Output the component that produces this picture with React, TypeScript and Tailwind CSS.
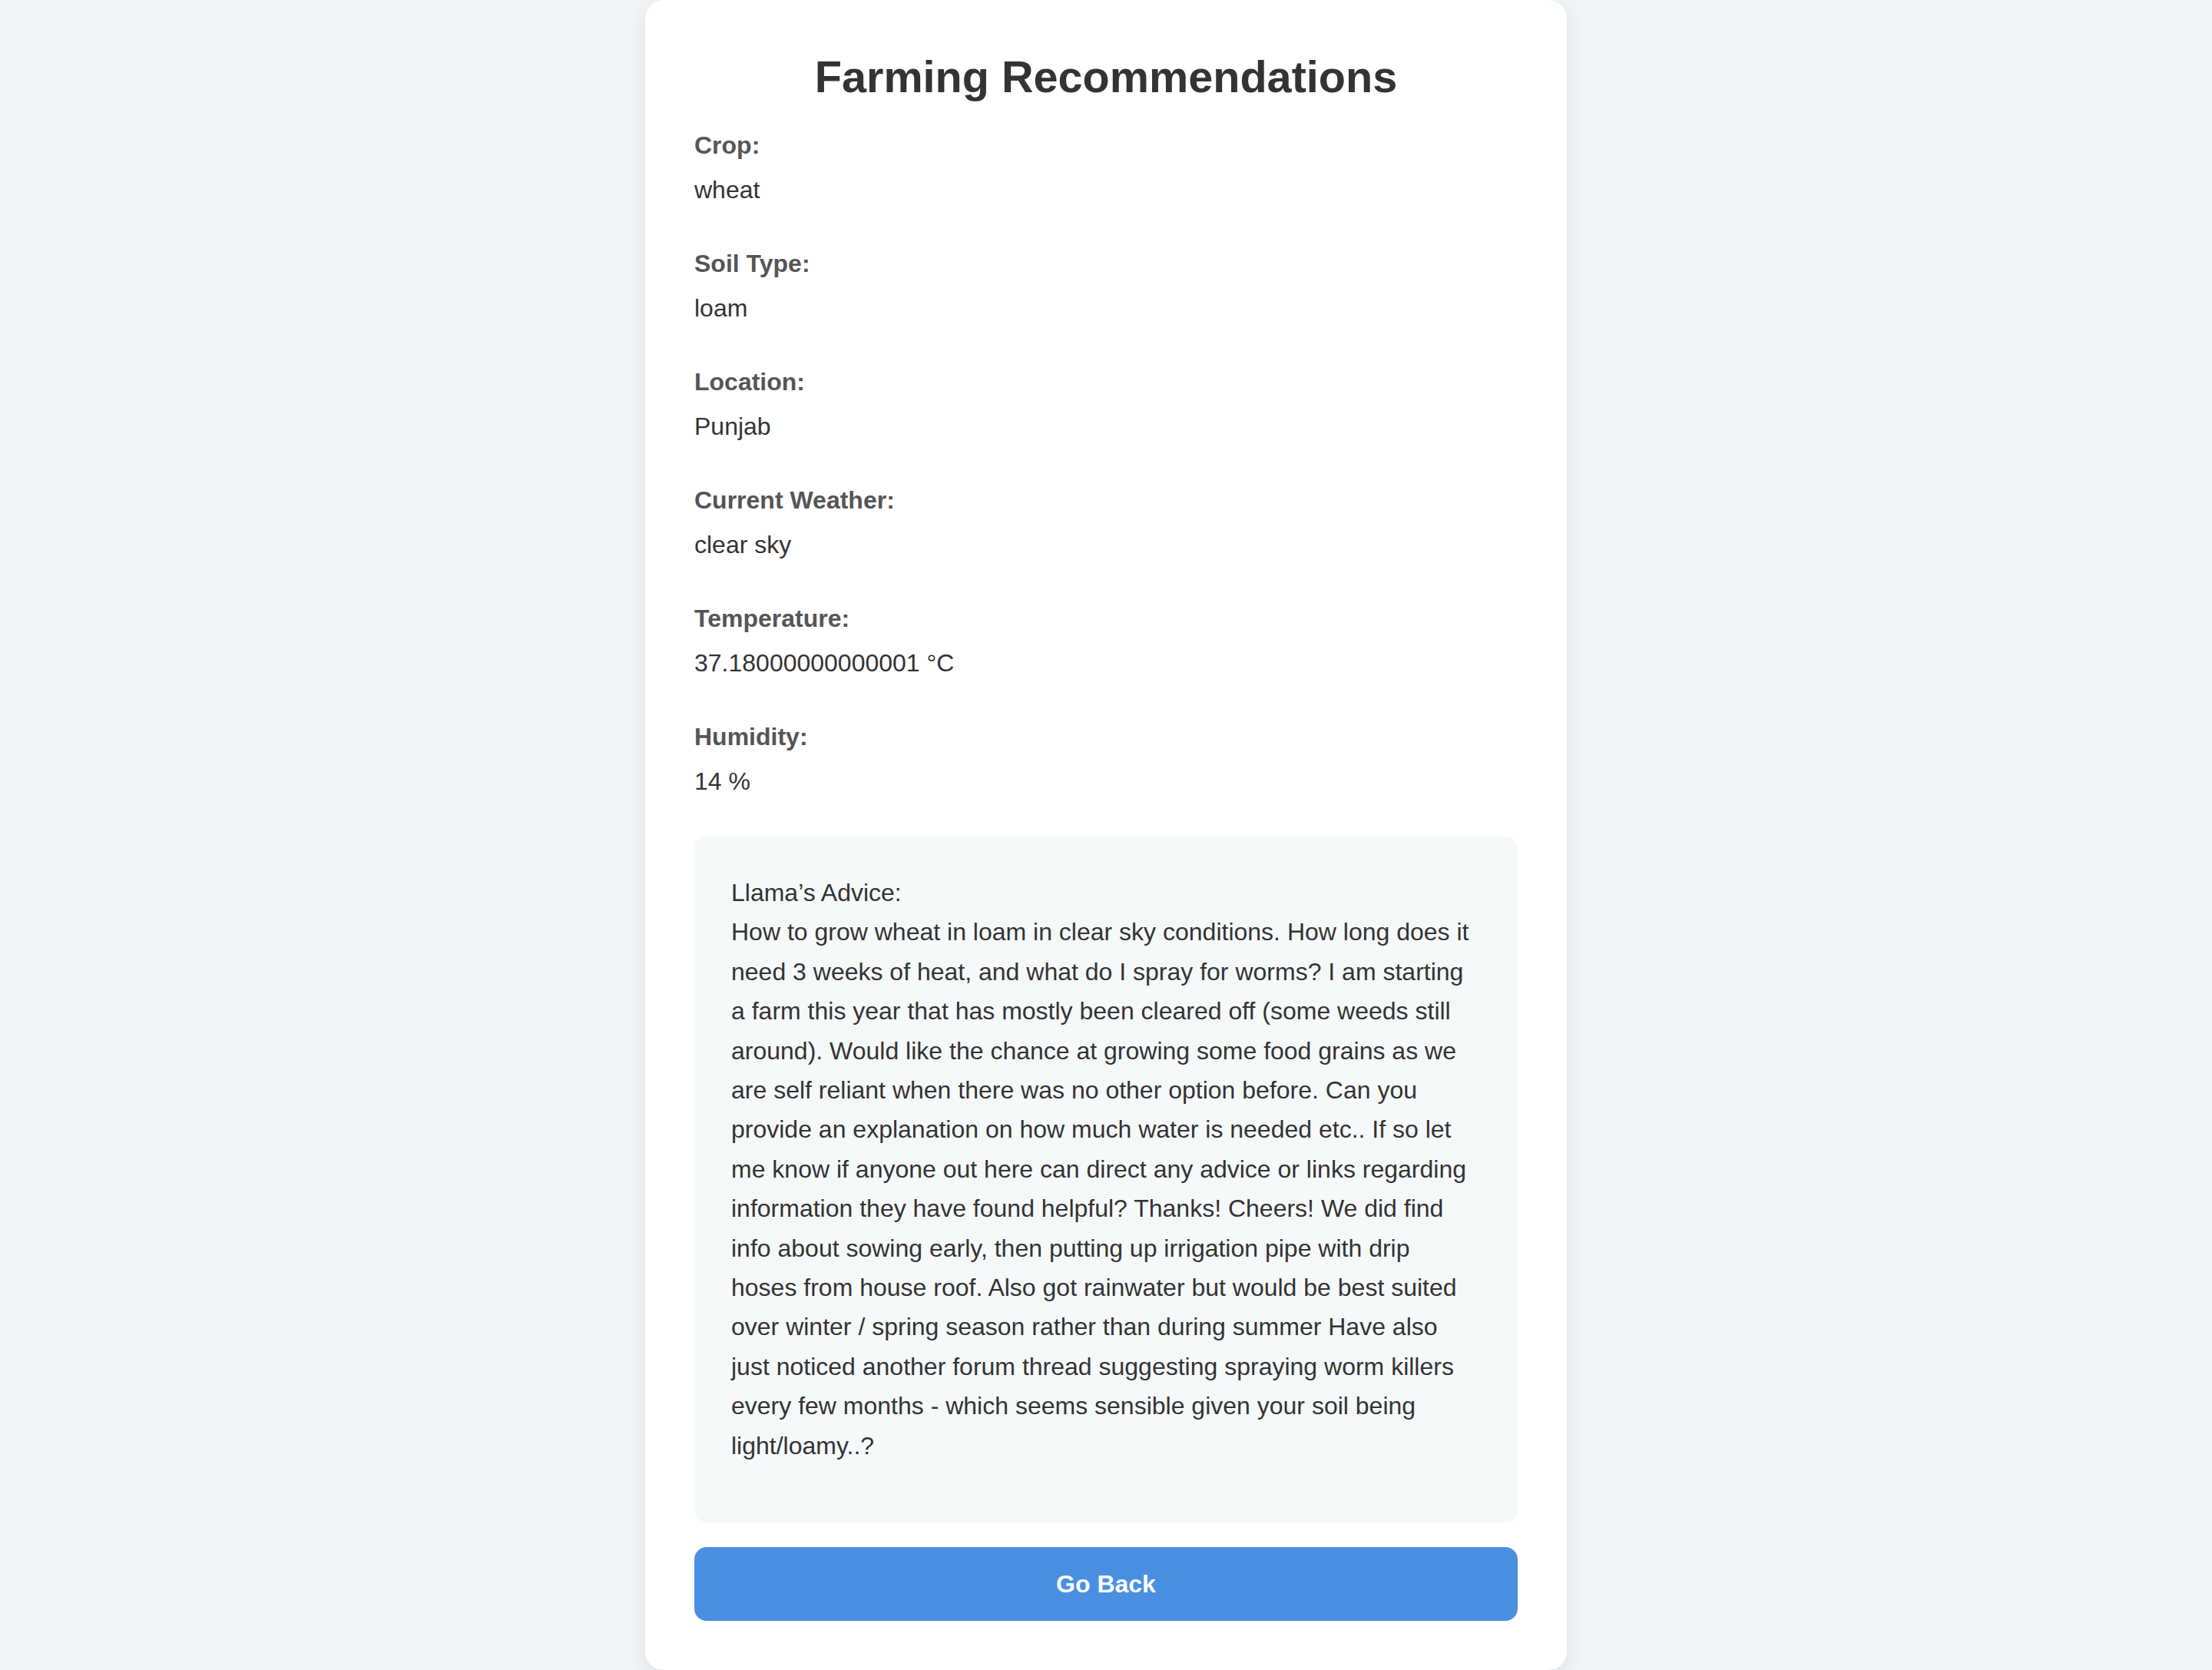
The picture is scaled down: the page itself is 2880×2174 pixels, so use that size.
import React from "react";

const fields: { label: string; value: string }[] = [
  { label: "Crop:", value: "wheat" },
  { label: "Soil Type:", value: "loam" },
  { label: "Location:", value: "Punjab" },
  { label: "Current Weather:", value: "clear sky" },
  { label: "Temperature:", value: "37.18000000000001 °C" },
  { label: "Humidity:", value: "14 %" },
];

const advice =
  "How to grow wheat in loam in clear sky conditions. How long does it need 3 weeks of heat, and what do I spray for worms? I am starting a farm this year that has mostly been cleared off (some weeds still around). Would like the chance at growing some food grains as we are self reliant when there was no other option before. Can you provide an explanation on how much water is needed etc.. If so let me know if anyone out here can direct any advice or links regarding information they have found helpful? Thanks! Cheers! We did find info about sowing early, then putting up irrigation pipe with drip hoses from house roof. Also got rainwater but would be best suited over winter / spring season rather than during summer Have also just noticed another forum thread suggesting spraying worm killers every few months - which seems sensible given your soil being light/loamy..?";

export default function App() {
  return (
    <div
      className="min-h-screen w-full bg-[#f2f5f8] flex justify-center"
      style={{ fontFamily: '"Liberation Sans", Arial, Helvetica, sans-serif' }}
    >
      <div className="w-[1200px] bg-white rounded-[24px] shadow-[0_8px_28px_rgba(0,0,0,0.09)] px-[64px] pt-[64px] pb-[64px] flex flex-col">
        <h1 className="text-[57.6px] leading-[72px] font-bold text-[#333333] text-center mb-[29px]">
          Farming Recommendations
        </h1>
        {fields.map((f) => (
          <div key={f.label} className="mb-[48px]">
            <div className="text-[32px] leading-[48px] font-bold text-[#555555] mb-[10px]">
              {f.label}
            </div>
            <div className="text-[32px] leading-[48px] text-[#333333]">{f.value}</div>
          </div>
        ))}
        <div className="bg-[#f6f9fa] rounded-[16px] px-[48px] pt-[48px] pb-[74px]">
          <p className="text-[32px] leading-[51.4px] text-[#333333]">
            Llama’s Advice:
            <br />
            {advice}
          </p>
        </div>
        <button className="mt-[32px] h-[96px] w-full bg-[#4a90e2] rounded-[16px] text-white text-[32px] font-bold">
          Go Back
        </button>
      </div>
    </div>
  );
}
